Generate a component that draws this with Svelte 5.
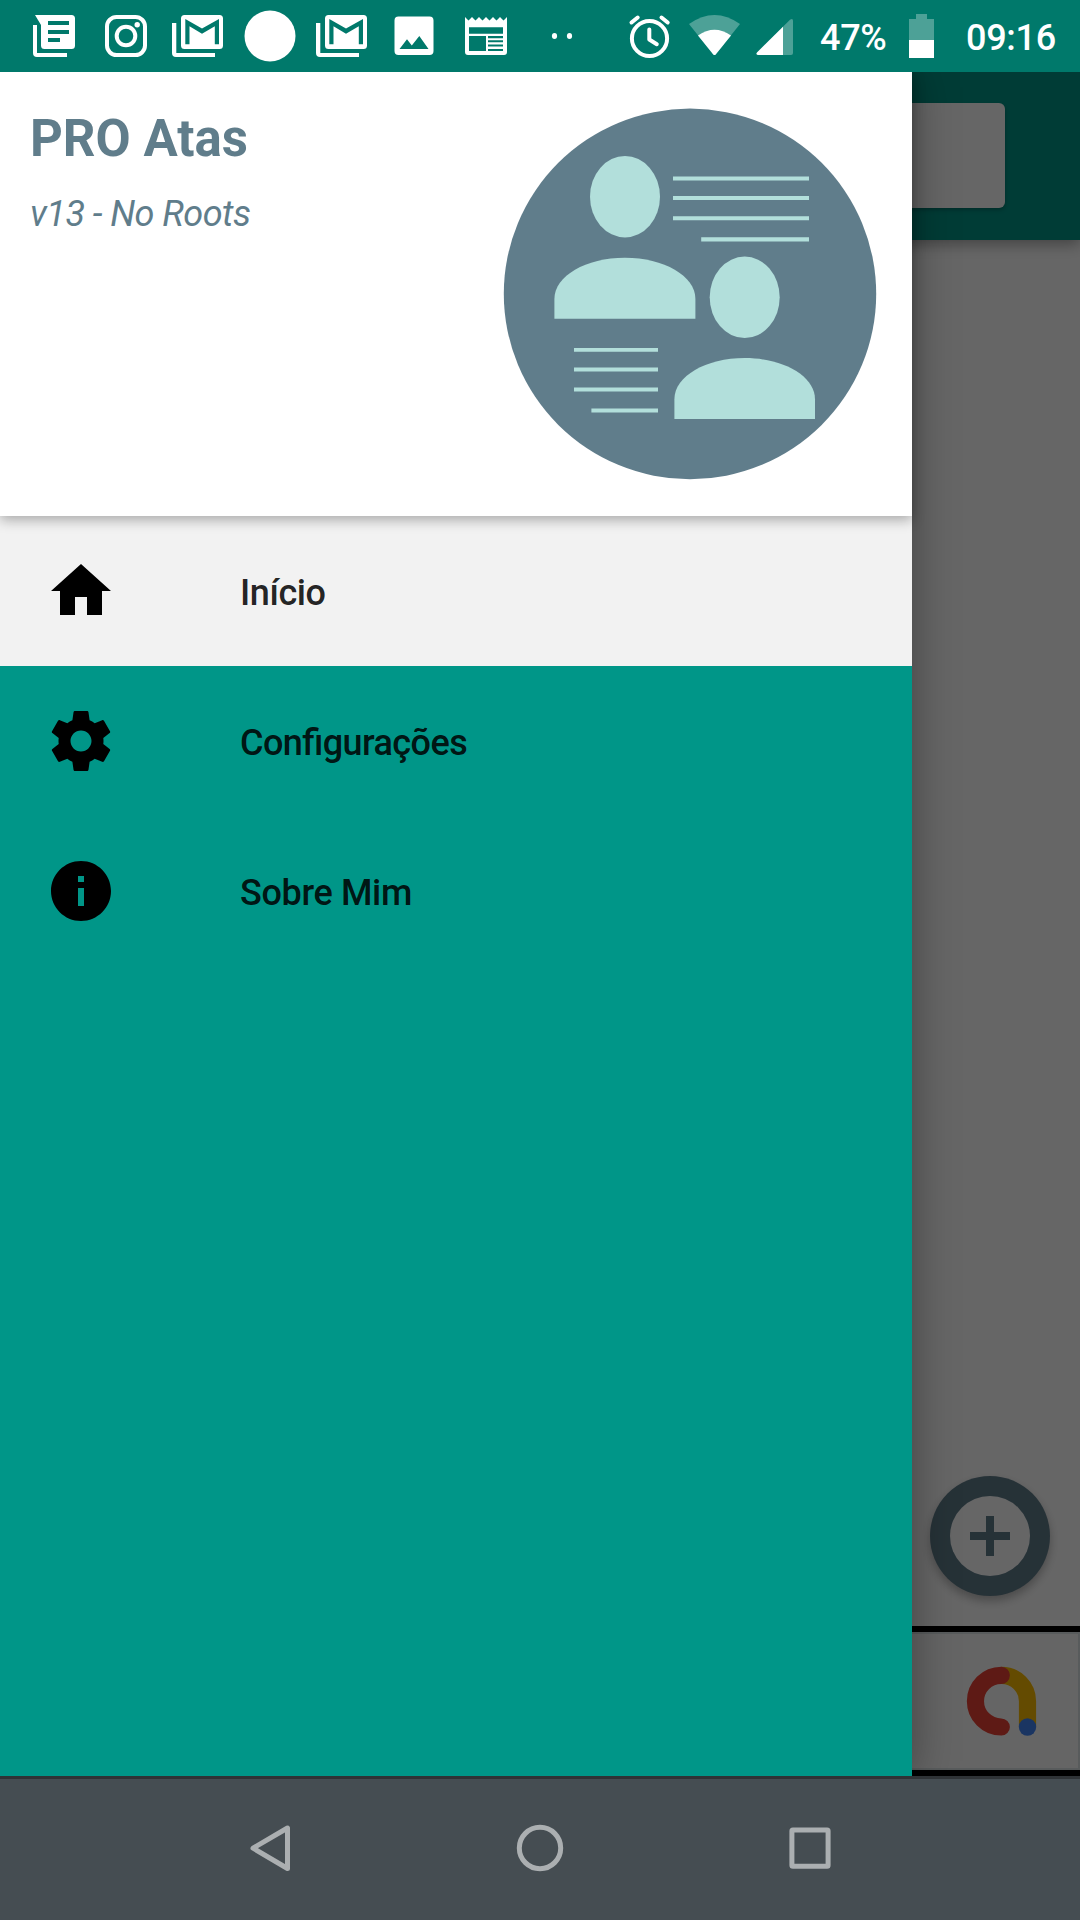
<script>
  const menu = [
    { label: 'Início', tracking: -0.4, active: true, d: 'M10 20v-6h4v6h5v-8h3L12 3 2 12h3v8z' },
    {
      label: 'Configurações',
      tracking: -0.57,
      active: false,
      d: 'M19.43 12.98c.04-.32.07-.64.07-.98s-.03-.66-.07-.98l2.11-1.65c.19-.15.24-.42.12-.64l-2-3.46c-.12-.22-.39-.3-.61-.22l-2.49 1c-.52-.4-1.08-.73-1.69-.98l-.38-2.65C14.46 2.18 14.25 2 14 2h-4c-.25 0-.46.18-.49.42l-.38 2.65c-.61.25-1.17.59-1.69.98l-2.49-1c-.23-.09-.49 0-.61.22l-2 3.46c-.13.22-.07.49.12.64l2.11 1.65c-.04.32-.07.65-.07.98s.03.66.07.98l-2.11 1.65c-.19.15-.24.42-.12.64l2 3.46c.12.22.39.3.61.22l2.49-1c.52.4 1.08.73 1.69.98l.38 2.65c.03.24.24.42.49.42h4c.25 0 .46-.18.49-.42l.38-2.65c.61-.25 1.17-.59 1.69-.98l2.49 1c.23.09.49 0 .61-.22l2-3.46c.12-.22.07-.49-.12-.64l-2.11-1.65zM12 15.5c-1.93 0-3.5-1.57-3.5-3.5s1.57-3.5 3.5-3.5 3.5 1.57 3.5 3.5-1.57 3.5-3.5 3.5z'
    },
    {
      label: 'Sobre Mim',
      tracking: -0.35,
      active: false,
      d: 'M12 2C6.48 2 2 6.48 2 12s4.48 10 10 10 10-4.48 10-10S17.52 2 12 2zm1 15h-2v-6h2v6zm0-8h-2V7h2v2z'
    }
  ];
</script>

{#snippet gmail()}
  <svg class="note" viewBox="162 0 72 72">
    <path d="M172 23h4.300v30H215v4H176q-4 0-4-4z" />
    <path
      fill-rule="evenodd"
      d="M184.500 15h35q3.500 0 3.500 3.500v27q0 3.500-3.500 3.500h-35q-3.500 0-3.500-3.500v-27q0-3.500 3.500-3.500zM185.300 19v25.300h4.200V26.300L202 33.700l12.800-7.400v18h4.200V19L202 28.500z"
    />
  </svg>
{/snippet}

<div class="screen">
  <header class="status">
    <div class="notes">
      <svg class="note" viewBox="18 0 72 72">
        <path d="M33 25h4v28h30v4H37q-4 0-4-4z" />
        <path
          fill-rule="evenodd"
          d="M35 15h36.500q3.500 0 3.500 3.500v27q0 3.500-3.500 3.500h-27q-3.500 0-3.500-3.500V25zM48 21v4h21v-4zM48 30v4h21v-4zM48 38v4h12v-4z"
        />
      </svg>
      <svg class="note line" viewBox="90 0 72 72">
        <rect x="107" y="17" width="38" height="38" rx="9.500" />
        <circle cx="126" cy="36" r="9.300" />
        <circle class="solid" cx="137.200" cy="24.800" r="2.700" />
      </svg>
      {@render gmail()}
      <svg class="note" viewBox="234 0 72 72"><circle cx="270" cy="36" r="25.500" /></svg>
      {@render gmail()}
      <svg class="note" viewBox="378 0 72 72">
        <path
          fill-rule="evenodd"
          d="M398.500 16.500h31q4 0 4 4v30.500q0 4-4 4h-31q-4 0-4-4V20.500q0-4 4-4zM399.500 49h29L419.300 36l-7.500 9.500-4.800-6.300z"
        />
      </svg>
      <svg class="note" viewBox="450 0 72 72">
        <path
          fill-rule="evenodd"
          d="M465 17l3.500 3.500 3.500-3.500 3.500 3.500 3.500-3.500 3.500 3.500 3.500-3.500 3.500 3.500 3.500-3.500 3.500 3.500 3.500-3.500 3.500 3.500 3.500-3.500v35q0 3-3 3h-36q-3 0-3-3zM469 27.300v6.500h34v-6.500zM469 36v15h17V36zM488 36v2.300h15V36zM488 40.300v2h15v-2zM488 44.600v2h15v-2zM488 49v2h15v-2z"
        />
      </svg>
      <svg class="note" viewBox="526 0 72 72">
        <ellipse cx="554.500" cy="36" rx="2.600" ry="3" />
        <ellipse cx="569.500" cy="36" rx="2.600" ry="3" />
      </svg>
    </div>
    <div class="system">
      <svg class="alarm line" viewBox="626 0 48 72">
        <circle cx="649.500" cy="38.500" r="17.600" />
        <path d="M649.300 29.500v10l7.500 4.700M631.500 22.500l6.200-5M667.700 22.500l-6.200-5" />
      </svg>
      <svg class="wifi" viewBox="688 0 54 72">
        <path class="faint" d="M689 24Q714.500 6 740 24L715.700 54.500q-1.200 1-2.400 0z" />
        <path d="M698 35.500q16.500-11.500 33 0L715.700 54.500q-1.200 1-2.400 0z" />
      </svg>
      <svg class="signal" viewBox="756 0 38 72">
        <path class="faint" d="M790 19.800q3-2 3 1.200v32q0 2-2 2H758q-2.500-.5-1-2.500z" />
        <path d="M783 26.800V55H758q-2.500-.5-1-2.500z" />
      </svg>
      <span class="percent">47%</span>
      <svg class="battery" viewBox="908 0 28 72">
        <path class="faint" d="M916 14h11v5h7v21h-25V19h7z" />
        <path d="M909 40h25v18h-25z" />
      </svg>
      <time>09:16</time>
    </div>
  </header>

  <div class="stage">
    <main>
      <div class="toolbar"><div class="search"></div></div>
      <div class="content">
        <div class="fab">
          <svg viewBox="0 0 80 80"><circle cx="40" cy="40" r="40" /><path d="M36 20h8v16h16v8H44v16h-8V44H20v-8h16z" /></svg>
        </div>
      </div>
      <div class="banner">
        <div class="ad">
          <svg viewBox="962 1661 80 80">
            <path class="yellow" d="M1001.300 1675.300A26 26 0 0 1 1027.500 1701.300V1727" />
            <path class="red" d="M1001.300 1675.300a25.800 25.800 0 0 0 0 51.700" />
            <circle cx="1027.500" cy="1727" r="8.700" />
          </svg>
        </div>
      </div>
    </main>
    <div class="scrim"></div>

    <aside class="drawer">
      <div class="head">
        <div class="titles">
          <h1>PRO Atas</h1>
          <p>v13 - No Roots</p>
        </div>
        <svg class="logo" viewBox="500 104 380 380">
          <ellipse class="disc" cx="690" cy="293.900" rx="186.200" ry="185.300" />
          <ellipse cx="625" cy="196.700" rx="35" ry="40.700" />
          <path d="M554.400 318.700V299c0-23 31.500-41.200 70.500-41.200s70.500 18.200 70.500 41.200v19.700z" />
          <ellipse cx="744.700" cy="297.300" rx="35" ry="40.700" />
          <path d="M674.400 419V399.300c0-23 31.500-41.200 70.400-41.200s70.200 18.200 70.200 41.200V419z" />
          <path d="M673 176.500h136v4H673zM673 196.100h136v4H673zM673 216.200h136v4H673zM701.200 237.300h107.800v4.200H701.200z" />
          <path d="M574 347.900h84v3.900h-84zM574 367.400h84v4.100h-84zM574 387.400h84v4.100h-84zM591.400 408.400H658v4.200h-66.600z" />
        </svg>
      </div>
      <nav>
        {#each menu as item}
          <div class="item" class:active={item.active}>
            <svg viewBox="0 0 24 24"><path d={item.d} /></svg>
            <span style:letter-spacing="{item.tracking}px">{item.label}</span>
          </div>
        {/each}
      </nav>
    </aside>
  </div>

  <footer>
    <svg viewBox="216 1824 108 48">
      <path d="M287.500 1828v40.500L253 1848.200z" />
    </svg>
    <svg viewBox="486 1824 108 48"><ellipse cx="540" cy="1848" rx="20.700" ry="20.700" /></svg>
    <svg viewBox="756 1824 108 48"><rect x="791.900" y="1830" width="36.200" height="36.200" rx="1" /></svg>
  </footer>
</div>

<style>
  :global(body) {
    margin: 0;
  }
  .screen {
    width: 1080px;
    height: 1920px;
    display: flex;
    flex-direction: column;
    overflow: hidden;
    font-family: Roboto, 'Liberation Sans', sans-serif;
  }
  svg {
    display: block;
    flex: none;
  }

  .status {
    height: 72px;
    flex: none;
    display: flex;
    justify-content: space-between;
    box-sizing: border-box;
    padding: 0 23px 0 18px;
    background: #00796b;
    color: #fff;
    font-size: 36px;
    font-weight: 500;
    letter-spacing: -0.3px;
  }
  .status svg {
    height: 72px;
    fill: #fff;
  }
  .notes,
  .system {
    display: flex;
    align-items: center;
  }
  .note {
    width: 72px;
  }
  .note:last-child {
    margin-left: 4px;
  }
  .status .line {
    fill: none;
    stroke: #fff;
    stroke-width: 4;
    stroke-linecap: round;
    stroke-linejoin: round;
  }
  .status .solid {
    fill: #fff;
    stroke: none;
  }
  .faint {
    opacity: 0.3;
  }
  .alarm {
    width: 48px;
  }
  .wifi {
    width: 54px;
    margin-left: 14px;
  }
  .signal {
    width: 38px;
    margin-left: 14px;
  }
  .percent {
    width: 68px;
    margin-left: 26px;
    padding-top: 3px;
  }
  .battery {
    width: 28px;
    margin-left: 20px;
  }
  time {
    width: 91px;
    margin-left: 30px;
    padding-top: 3px;
  }

  .stage {
    position: relative;
    height: 1704px;
    flex: none;
    overflow: hidden;
  }
  main {
    height: 100%;
    display: flex;
    flex-direction: column;
    background: #fff;
  }
  .toolbar {
    height: 168px;
    box-sizing: border-box;
    padding: 31px 75px 32px 30px;
    background: #009688;
    box-shadow: 0 4px 14px rgba(0, 0, 0, 0.36);
  }
  .search {
    height: 105px;
    border-radius: 6px;
    background: #fff;
    box-shadow: 0 2px 4px rgba(0, 0, 0, 0.25);
  }
  .content {
    flex: 1;
    display: flex;
    align-items: flex-end;
    justify-content: flex-end;
    padding: 0 30px 30px;
  }
  .fab {
    width: 120px;
    height: 120px;
    display: grid;
    place-items: center;
    border-radius: 50%;
    background: #607d8b;
    box-shadow: 0 5px 10px rgba(0, 0, 0, 0.28);
  }
  .fab svg {
    width: 80px;
    height: 80px;
    fill: #607d8b;
  }
  .fab circle {
    fill: #fff;
  }
  .banner {
    height: 150px;
    box-sizing: border-box;
    padding: 6px 0;
    background: #000;
  }
  .ad {
    height: 138px;
    box-sizing: border-box;
    display: flex;
    align-items: center;
    justify-content: flex-end;
    padding-right: 36px;
    border: 2px solid #dde3e6;
    background: #fdfdfd;
  }
  .ad svg {
    width: 80px;
    height: 80px;
    fill: none;
    stroke-width: 17.2;
  }
  .ad .red {
    stroke: #ea4335;
    stroke-linecap: round;
  }
  .ad .yellow {
    stroke: #fbbc04;
  }
  .ad circle {
    fill: #4285f4;
  }
  .scrim {
    position: absolute;
    inset: 0;
    background: rgba(0, 0, 0, 0.6);
  }

  .drawer {
    position: absolute;
    top: 0;
    left: 0;
    width: 912px;
    height: 100%;
    background: #009688;
    box-shadow: 0 0 42px rgba(0, 0, 0, 0.36);
  }
  .head {
    position: relative;
    height: 444px;
    box-sizing: border-box;
    display: flex;
    justify-content: space-between;
    padding: 32px 32px 32px 30px;
    background: #fff;
    box-shadow: 0 4px 12px rgba(0, 0, 0, 0.3);
    color: #607d8b;
  }
  h1 {
    margin: 5px 0 0;
    font-size: 51px;
    line-height: 60px;
    font-weight: 700;
  }
  p {
    margin: 24px 0 0;
    font-size: 36px;
    line-height: 42px;
    font-style: italic;
    letter-spacing: -0.54px;
  }
  .logo {
    width: 380px;
    height: 380px;
    fill: #b2dfdb;
  }
  .disc {
    fill: #607d8b;
  }
  .item {
    height: 150px;
    box-sizing: border-box;
    display: flex;
    align-items: center;
    gap: 123px;
    padding-left: 45px;
    color: rgba(0, 0, 0, 0.87);
    font-size: 36px;
    font-weight: 500;
    font-feature-settings: 'liga' 1;
  }
  .item.active {
    background: #f2f2f2;
  }
  .item svg {
    width: 72px;
    height: 72px;
    fill: #000;
  }
  .item span {
    padding-top: 3px;
  }

  footer {
    flex: 1;
    box-sizing: border-box;
    display: flex;
    align-items: center;
    justify-content: center;
    gap: 162px;
    border-top: 3px solid #2f3336;
    padding-bottom: 3px;
    background: #454d52;
  }
  footer svg {
    width: 108px;
    height: 48px;
    fill: none;
    stroke: #abafb1;
    stroke-width: 5;
    stroke-linejoin: round;
  }
</style>
